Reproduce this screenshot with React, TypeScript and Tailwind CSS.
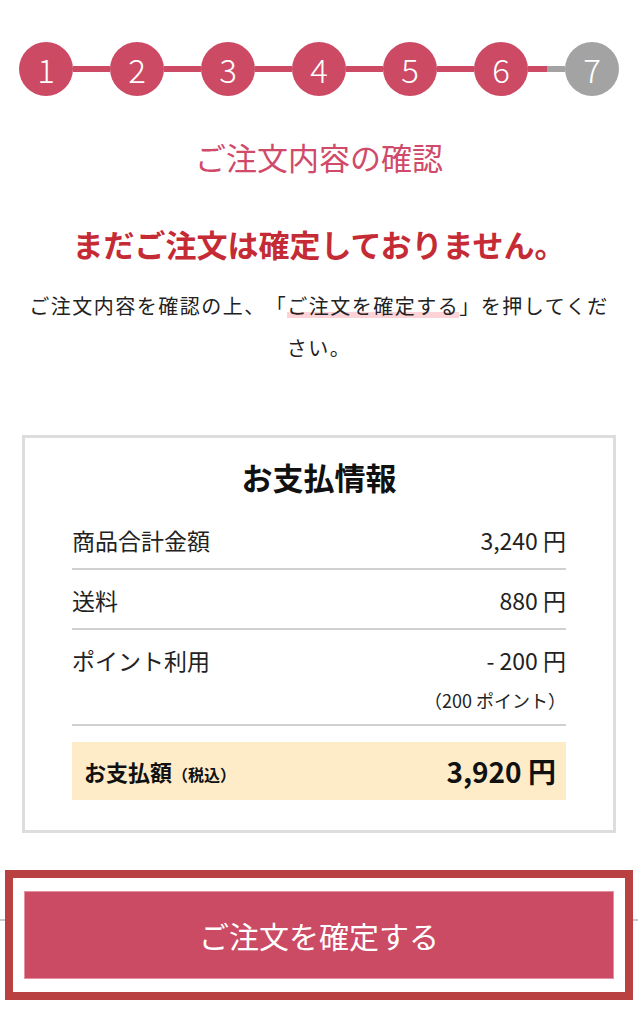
import React from "react";

const steps = [1, 2, 3, 4, 5, 6, 7];
const current = 6;

export default function App() {
  return (
    <div className="w-[638px] min-h-[1029px] bg-white text-[#222] font-['Noto_Sans_CJK_JP','Noto_Sans',sans-serif] [text-spacing-trim:space-all]">
      {/* Step indicator */}
      <div className="flex items-center pt-[42px] px-[19px]">
        {steps.map((n, i) => (
          <React.Fragment key={n}>
            {i > 0 && (
              n <= current ? (
                <div className="flex-1 h-[6px] bg-[#cc4a64]" />
              ) : (
                <div className="flex-1 h-[6px] flex">
                  <div className="flex-1 bg-[#cc4a64]" />
                  <div className="flex-1 bg-[#a3a3a3]" />
                </div>
              )
            )}
            <div
              className={`w-[54px] h-[54px] rounded-full flex items-center justify-center text-white text-[33px] font-light leading-none ${
                n <= current ? "bg-[#cc4a64]" : "bg-[#a3a3a3]"
              }`}
            >
              {n}
            </div>
          </React.Fragment>
        ))}
      </div>

      {/* Headings */}
      <h1 className="mt-[41px] text-center text-[31px] leading-[40px] text-[#d04a6a]">ご注文内容の確認</h1>
      <p className="mt-[47px] text-center text-[31px] leading-[40px] font-bold text-[#c52b35]">
        まだご注文は確定しておりません。
      </p>
      <p className="mt-[21px] px-5 text-center text-[20px] leading-[42px] tracking-[1.5px] text-[#222]">
        ご注文内容を確認の上、「
        <span className="bg-[linear-gradient(to_bottom,transparent_72%,#fdd3d7_72%,#fdd3d7_92%,transparent_92%)]">
          ご注文を確定する
        </span>
        」を押してください。
      </p>

      {/* Payment info */}
      <div className="mt-[66px] mx-[22px] border-[3px] border-[#dddddd] pt-[19px] pb-[30px] px-[47px]">
        <h2 className="text-center text-[31px] leading-[40px] font-bold text-[#111]">お支払情報</h2>
        <div className="mt-[13px]">
          <div className="flex justify-between pt-[15px] pb-[13px] text-[23px] leading-[30px] border-b-2 border-[#d0d0d0]">
            <span>商品合計金額</span>
            <span>3,240 円</span>
          </div>
          <div className="flex justify-between pt-[15px] pb-[13px] text-[23px] leading-[30px] border-b-2 border-[#d0d0d0]">
            <span>送料</span>
            <span>880 円</span>
          </div>
          <div className="pt-[15px] pb-[12px] border-b-2 border-[#d0d0d0]">
            <div className="flex justify-between text-[23px] leading-[30px]">
              <span>ポイント利用</span>
              <span>- 200 円</span>
            </div>
            <div className="mt-[13px] text-right text-[18px] leading-[24px]">（200 ポイント）</div>
          </div>
          <div className="mt-4 h-[58px] bg-[#feecc8] flex items-center justify-between pl-3 pr-[10px] font-bold text-[#111]">
            <span className="text-[22px]">
              お支払額<span className="text-[16px]">（税込）</span>
            </span>
            <span className="text-[28px]">3,920 円</span>
          </div>
        </div>
      </div>

      {/* Confirm button */}
      <div className="mt-[37px] px-[5px] bg-[linear-gradient(to_bottom,transparent_49px,#cccccc_49px,#cccccc_51px,transparent_51px)]">
        <div className="border-[8px] border-[#b94141] bg-white px-[11px] py-[13px]">
          <button className="w-full h-[88px] bg-[#cb4b64] border border-[#e690a2] text-white text-[30px] leading-none">
            ご注文を確定する
          </button>
        </div>
      </div>
    </div>
  );
}
